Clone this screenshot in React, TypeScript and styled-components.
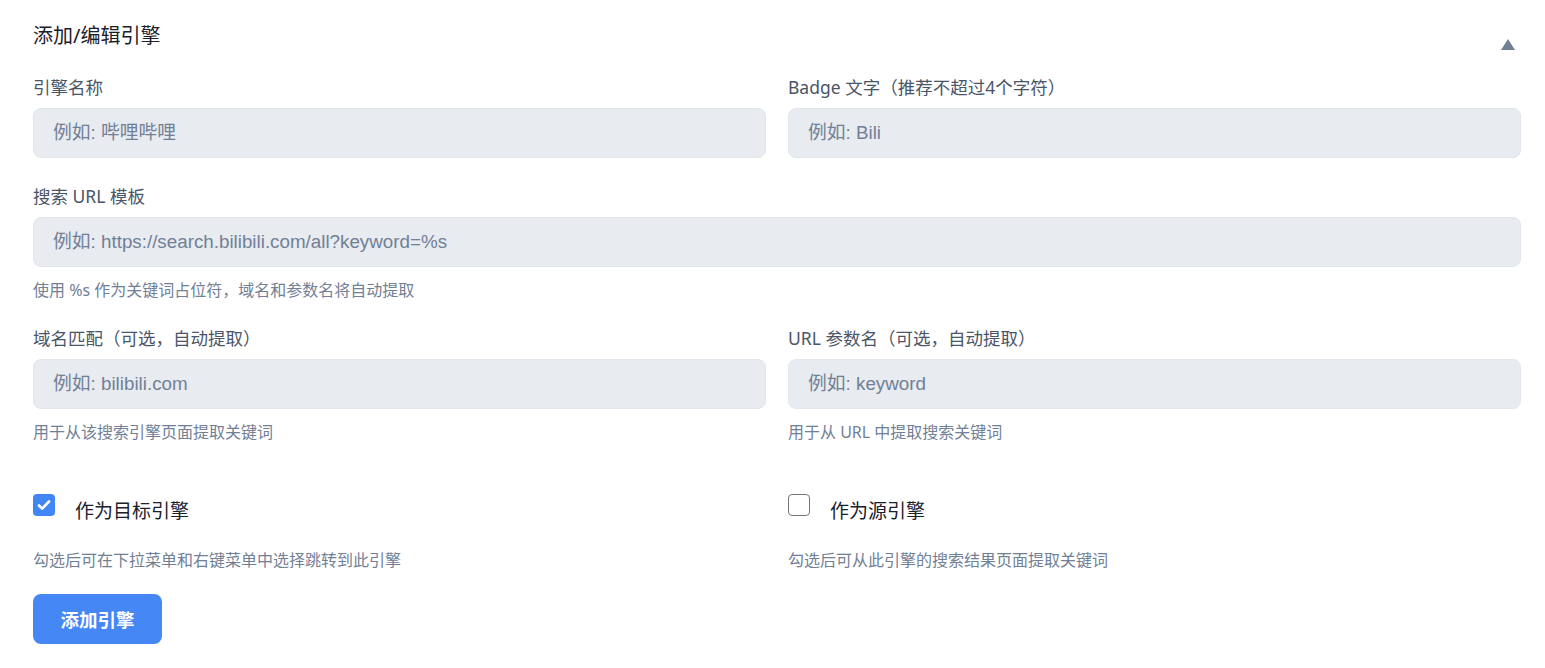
import * as React from 'react';
import styled, { createGlobalStyle } from 'styled-components';

const GlobalStyle = createGlobalStyle`
  html, body {
    margin: 0;
    padding: 0;
    background: #ffffff;
  }
  body {
    font-family: "Noto Sans", "Noto Sans CJK SC", sans-serif;
  }
  * {
    box-sizing: border-box;
  }
`;

const Card = styled.div`
  background: #ffffff;
  padding: 22px 24px 23px 33px;
  width: 1545px;
`;

const Header = styled.div`
  display: flex;
  justify-content: space-between;
  align-items: flex-start;
  margin-bottom: 25px;
`;

const Title = styled.h2`
  margin: 0;
  font-size: 20px;
  line-height: 28px;
  font-weight: 400;
  color: #1a202c;
`;

const Toggle = styled.button`
  border: none;
  background: none;
  padding: 0;
  margin: 17px 6px 0 0;
  display: flex;
  cursor: pointer;
`;

const Row = styled.div`
  display: grid;
  grid-template-columns: 1fr 1fr;
  column-gap: 22px;
`;

const Field = styled.div<{ $spacing?: number }>`
  display: flex;
  flex-direction: column;
  margin-bottom: ${(p) => p.$spacing ?? 25}px;
`;

const Label = styled.label`
  font-size: 17.5px;
  line-height: 24px;
  color: #4a5568;
  margin-bottom: 9px;
`;

const Input = styled.input`
  height: 50px;
  width: 100%;
  border: 1px solid #e2e6ec;
  border-radius: 8px;
  background: #e8ebf0;
  padding: 0 19px;
  font-family: "Liberation Sans", "Noto Sans CJK SC", sans-serif;
  font-size: 18.8px;
  color: #2d3748;
  outline: none;

  &::placeholder {
    color: #718096;
  }
`;

const Hint = styled.div`
  font-size: 16px;
  line-height: 22px;
  color: #718096;
  margin-top: 12px;
`;

const CheckField = styled.div`
  display: flex;
  flex-direction: column;
  margin-top: 26px;
`;

const CheckLabel = styled.label`
  display: flex;
  align-items: center;
  gap: 20px;
  font-size: 19px;
  line-height: 28px;
  color: #1a202c;
  cursor: pointer;
`;

const Box = styled.span<{ $checked: boolean }>`
  width: 22px;
  height: 22px;
  flex: none;
  border-radius: 4px;
  margin-bottom: 12px;
  display: flex;
  align-items: center;
  justify-content: center;
  background: ${(p) => (p.$checked ? '#4285f4' : '#ffffff')};
  border: ${(p) => (p.$checked ? 'none' : '1.5px solid #767676')};
`;

const CheckHint = styled(Hint)`
  margin-top: 21px;
`;

const Submit = styled.button`
  margin-top: 23px;
  width: 129px;
  height: 50px;
  border: none;
  border-radius: 8px;
  background: #4487f5;
  color: #ffffff;
  font-family: "Noto Sans", "Noto Sans CJK SC", sans-serif;
  font-size: 18.5px;
  font-weight: 700;
  cursor: pointer;
`;

const Check: React.FC<{ checked: boolean; label: string; hint: string }> = ({ checked, label, hint }) => (
  <CheckField>
    <CheckLabel>
      <Box $checked={checked}>
        {checked && (
          <svg width="16" height="16" viewBox="0 0 16 16">
            <path d="M3 8.5l3.2 3.2L13 4.5" fill="none" stroke="#fff" strokeWidth="2.6" strokeLinecap="round" strokeLinejoin="round" />
          </svg>
        )}
      </Box>
      {label}
    </CheckLabel>
    <CheckHint>{hint}</CheckHint>
  </CheckField>
);

export default function App() {
  return (
    <>
      <GlobalStyle />
      <Card>
        <Header>
          <Title>添加/编辑引擎</Title>
          <Toggle aria-label="收起">
            <svg width="14" height="11" viewBox="0 0 14 11">
              <path d="M7 0L14 11H0z" fill="#718096" />
            </svg>
          </Toggle>
        </Header>
        <Row>
          <Field $spacing={26}>
            <Label>引擎名称</Label>
            <Input placeholder="例如: 哔哩哔哩" />
          </Field>
          <Field $spacing={26}>
            <Label>Badge 文字（推荐不超过4个字符）</Label>
            <Input placeholder="例如: Bili" />
          </Field>
        </Row>
        <Field>
          <Label>搜索 URL 模板</Label>
          <Input placeholder="例如: https://search.bilibili.com/all?keyword=%s" />
          <Hint>使用 %s 作为关键词占位符，域名和参数名将自动提取</Hint>
        </Field>
        <Row>
          <Field>
            <Label>域名匹配（可选，自动提取）</Label>
            <Input placeholder="例如: bilibili.com" />
            <Hint>用于从该搜索引擎页面提取关键词</Hint>
          </Field>
          <Field>
            <Label>URL 参数名（可选，自动提取）</Label>
            <Input placeholder="例如: keyword" />
            <Hint>用于从 URL 中提取搜索关键词</Hint>
          </Field>
        </Row>
        <Row>
          <Check checked label="作为目标引擎" hint="勾选后可在下拉菜单和右键菜单中选择跳转到此引擎" />
          <Check checked={false} label="作为源引擎" hint="勾选后可从此引擎的搜索结果页面提取关键词" />
        </Row>
        <Submit>添加引擎</Submit>
      </Card>
    </>
  );
}
